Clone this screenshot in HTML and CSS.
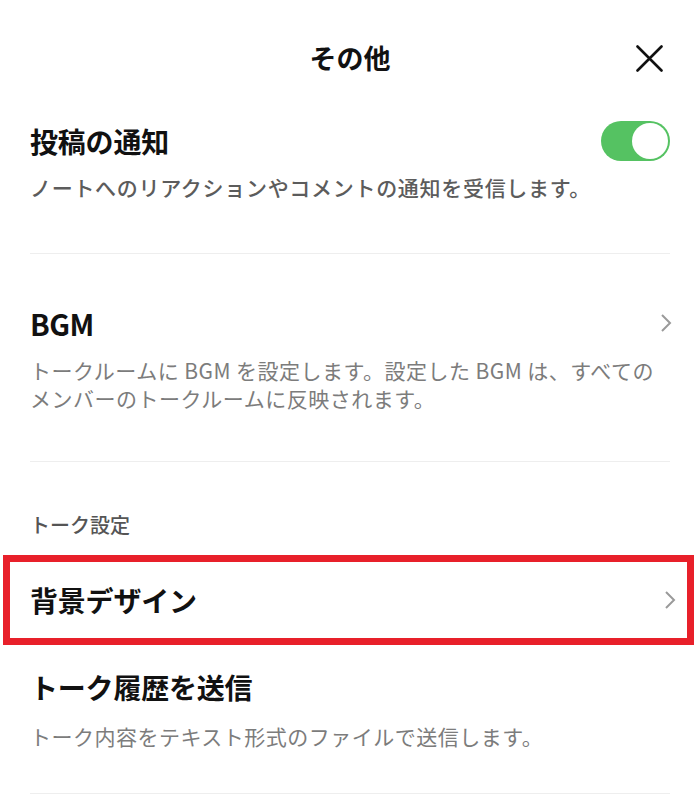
FILE: index.html
```html
<!DOCTYPE html>
<html lang="ja">
<head>
<meta charset="utf-8">
<title>その他</title>
<link rel="stylesheet" href="styles.css">
</head>
<body>
<div class="screen">
  <header class="header">
    <div></div>
    <h1 class="header-title">その他</h1>
    <button class="close" aria-label="閉じる">
      <svg width="27" height="27" viewBox="0 0 27 27"><path d="M1.5 1.5 L25.5 25.5 M25.5 1.5 L1.5 25.5" stroke="#111" stroke-width="2.6" fill="none" stroke-linecap="round"/></svg>
    </button>
  </header>

  <section class="block block-notify">
    <div class="row">
      <div class="row-title">投稿の通知</div>
      <div class="toggle"><div class="knob"></div></div>
    </div>
    <p class="desc desc-dark">ノートへのリアクションやコメントの通知を受信します。</p>
  </section>
  <div class="divider"></div>

  <section class="block block-bgm">
    <div class="row">
      <div class="row-title latin">BGM</div>
      <svg class="chev" width="12" height="20" viewBox="0 0 12 20"><polyline points="2,2 10,10 2,18" fill="none" stroke="#9a9a9a" stroke-width="2"/></svg>
    </div>
    <p class="desc">トークルームに<span class="lat">BGM</span>を設定します。設定した<span class="lat">BGM</span>は、すべての<br>メンバーのトークルームに反映されます。</p>
  </section>
  <div class="divider"></div>

  <section class="block block-talk">
    <div class="section-label">トーク設定</div>
  </section>
  <div class="highlight">
    <div class="row row-hl">
      <div class="row-title">背景デザイン</div>
      <svg class="chev" width="12" height="20" viewBox="0 0 12 20"><polyline points="2,2 10,10 2,18" fill="none" stroke="#9a9a9a" stroke-width="2"/></svg>
    </div>
  </div>
  <section class="block block-history">
    <div class="row">
      <div class="row-title">トーク履歴を送信</div>
    </div>
    <p class="desc">トーク内容をテキスト形式のファイルで送信します。</p>
  </section>
  <div class="divider"></div>
</div>
</body>
</html>
```
FILE: styles.css
```css
html, body {
  margin: 0;
  padding: 0;
  background: #fff;
}
body {
  font-family: "Noto Sans CJK JP", "Noto Sans", sans-serif;
  color: #111;
}
.screen {
  width: 700px;
  height: 796px;
  overflow: hidden;
}
.header {
  height: 116px;
  display: grid;
  grid-template-columns: 1fr auto 1fr;
  align-items: center;
}
.header-title {
  margin: 0;
  font-size: 27px;
  font-weight: 700;
  line-height: 40px;
  color: #111;
}
.close {
  justify-self: end;
  margin-right: 37px;
  padding: 0;
  border: 0;
  background: none;
  width: 27px;
  height: 27px;
  display: flex;
}
.block {
  padding: 0 30px 0 30px;
}
.row {
  height: 40px;
  display: flex;
  align-items: center;
  justify-content: space-between;
}
.row-title {
  font-size: 28px;
  font-weight: 700;
  line-height: 40px;
  color: #111;
  letter-spacing: -0.2px;
}
.row-title.latin {
  font-size: 29px;
  letter-spacing: -0.5px;
}
.chev {
  margin-right: -2px;
  display: block;
}
.toggle {
  width: 69px;
  height: 40px;
  border-radius: 20px;
  background: #55c262;
  display: flex;
  align-items: center;
  justify-content: flex-end;
  padding: 0 2px;
  box-sizing: border-box;
}
.knob {
  width: 36px;
  height: 36px;
  border-radius: 50%;
  background: #fff;
}
.desc {
  margin: 0;
  font-size: 21px;
  line-height: 28px;
  color: #7c7c7c;
  font-weight: 400;
  letter-spacing: 0.5px;
}
.desc-dark {
  color: #5c5c5c;
  font-weight: 500;
  letter-spacing: 0.7px;
}
.lat {
  padding: 0 5px;
}
.block-notify {
  padding-top: 5px;
  padding-bottom: 52px;
}
.block-notify .desc {
  margin-top: 12px;
}
.divider {
  height: 1px;
  background: #eeeeee;
  margin: 0 30px;
}
.block-bgm {
  padding-top: 49px;
  padding-bottom: 49px;
}
.block-bgm .desc {
  margin-top: 13px;
}
.block-talk {
  padding-top: 49px;
  padding-bottom: 16px;
}
.section-label {
  font-size: 20px;
  line-height: 28px;
  font-weight: 500;
  color: #555;
}
.highlight {
  margin: 0 6px 0 3px;
  border: 7px solid #e8202a;
  height: 76px;
  padding: 0 13px 0 20px;
  display: flex;
  align-items: center;
}
.row-hl {
  flex: 1;
}
.block-history {
  padding-top: 22px;
  padding-bottom: 43px;
}
.block-history .desc {
  margin-top: 15px;
}
```
